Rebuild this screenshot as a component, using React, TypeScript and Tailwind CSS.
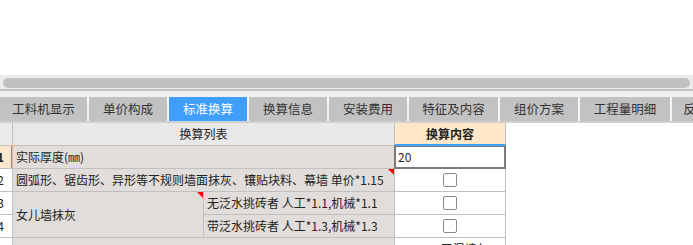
import React from 'react';

const TABS = [
  { label: '工料机显示', w: 'w-[87px]' },
  { label: '单价构成', w: 'w-[78px]' },
  { label: '标准换算', w: 'w-[78px]', active: true },
  { label: '换算信息', w: 'w-[78px]' },
  { label: '安装费用', w: 'w-[78px]' },
  { label: '特征及内容', w: 'w-[89px]' },
  { label: '组价方案', w: 'w-[78px]' },
  { label: '工程量明细', w: 'w-[90px]' },
  { label: '反查图形工程量', w: 'w-[110px]' },
];

function Flag() {
  return (
    <span className="absolute right-0 top-0 h-0 w-0 border-l-[6px] border-t-[6px] border-l-transparent border-t-[#ff0000]" />
  );
}

function Check() {
  return <span className="block h-[14px] w-[14px] rounded-[2px] border border-[#8a8a8a] bg-white" />;
}

function RowNo({ n }: { n: number }) {
  return (
    <div className="flex items-center justify-end overflow-hidden bg-white pr-[8px] text-[12px] text-[#222]">
      {n}
    </div>
  );
}

export default function App() {
  return (
    <div
      className="h-[245px] w-[693px] overflow-hidden bg-white text-[#222]"
      style={{ fontFamily: '"Noto Sans CJK SC", "Noto Sans", sans-serif' }}
    >
      <div className="h-[75px]" />

      {/* horizontal scrollbar */}
      <div className="h-[14px] bg-[#ebebeb] px-[3px] pt-[3px]">
        <div className="h-[10px] rounded-full bg-[#c1c1c1]" />
      </div>
      <div className="h-[2px] bg-[#c4c4c4]" />
      <div className="h-[6px] bg-[#f0f0f0]" />

      {/* tabs */}
      <div className="flex h-[24px] gap-[2px] bg-[#f4f4f4]">
        {TABS.map((t) => (
          <div
            key={t.label}
            className={`flex shrink-0 items-center justify-center text-[12.5px] ${t.w} ${
              t.active ? 'bg-[#409eff] text-white' : 'bg-[#c2c2c2] text-[#333]'
            }`}
          >
            {t.label}
          </div>
        ))}
      </div>
      <div className="h-[2px] bg-[#d0d0d0]" />

      {/* grid */}
      <div className="grid w-[506px] auto-rows-[22px] grid-cols-[12px_190px_190px_110px] gap-px border-r border-[#c0c0c0] bg-[#c0c0c0] text-[12px]">
        <div className="bg-[#ebebeb]" />
        <div className="col-span-2 flex items-center justify-center bg-[#e8e8e8]">换算列表</div>
        <div className="relative flex items-center justify-center bg-[#ffe7c9] font-bold">
          换算内容
          <span className="absolute -bottom-px left-0 right-0 h-[2px] bg-[#409eff]" />
        </div>

        <div className="relative flex items-center justify-end overflow-hidden bg-[#ffe7c9] pr-[8px] font-bold">
          1
          <span className="absolute -right-px bottom-0 top-0 w-[2px] bg-[#409eff]" />
        </div>
        <div className="col-span-2 flex items-center bg-[#e1ddda] pl-[3px]">实际厚度(㎜)</div>
        <div className="flex items-center bg-white pl-[3px] shadow-[0_0_0_1px_#7a7a7a,inset_0_0_0_1px_#7a7a7a]">20</div>

        <RowNo n={2} />
        <div className="relative col-span-2 flex items-center whitespace-nowrap bg-[#e1ddda] pl-[3px]">
          圆弧形、锯齿形、异形等不规则墙面抹灰、镶贴块料、幕墙 单价*1.15
          <Flag />
        </div>
        <div className="flex items-center justify-center bg-white">
          <Check />
        </div>

        <RowNo n={3} />
        <div className="relative row-span-2 flex items-center bg-[#e1ddda] pl-[3px]">
          女儿墙抹灰
          <Flag />
        </div>
        <div className="flex items-center whitespace-nowrap bg-[#e1ddda] pl-[3px]">无泛水挑砖者 人工*1.1,机械*1.1</div>
        <div className="flex items-center justify-center bg-white">
          <Check />
        </div>

        <RowNo n={4} />
        <div className="flex items-center whitespace-nowrap bg-[#e1ddda] pl-[3px]">带泛水挑砖者 人工*1.3,机械*1.3</div>
        <div className="flex items-center justify-center bg-white">
          <Check />
        </div>

        <RowNo n={5} />
        <div className="col-span-2 bg-[#e1ddda]" />
        <div className="flex items-center overflow-hidden whitespace-nowrap bg-white pl-[3px]">800011 天混墙灰</div>
      </div>
    </div>
  );
}
